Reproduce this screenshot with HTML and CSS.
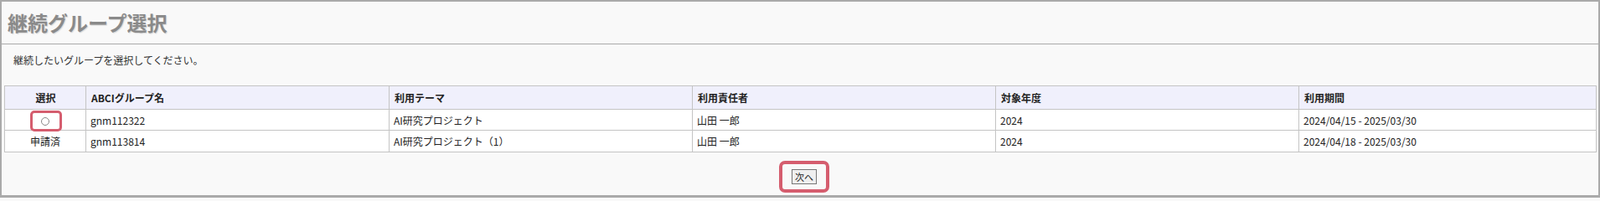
FILE: index.html
```html
<!DOCTYPE html>
<html lang="ja">
<head>
<meta charset="utf-8">
<title>継続グループ選択</title>
<link rel="stylesheet" href="styles.css">
</head>
<body>
<div class="frame">
  <h1 class="title">継続グループ選択</h1>
  <div class="content">
    <p class="lead">継続したいグループを選択してください。</p>
    <table class="groups">
      <colgroup>
        <col class="c-sel"><col class="c-mid"><col class="c-mid"><col class="c-mid"><col class="c-mid"><col>
      </colgroup>
      <thead>
        <tr>
          <th class="center">選択</th>
          <th>ABCIグループ名</th>
          <th>利用テーマ</th>
          <th>利用責任者</th>
          <th>対象年度</th>
          <th>利用期間</th>
        </tr>
      </thead>
      <tbody>
        <tr>
          <td class="center sel-cell"><input type="radio" name="grp" class="radio"><span class="hl-radio"></span></td>
          <td>gnm112322</td>
          <td>AI研究プロジェクト</td>
          <td>山田 一郎</td>
          <td>2024</td>
          <td>2024/04/15 - 2025/03/30</td>
        </tr>
        <tr>
          <td class="center">申請済</td>
          <td>gnm113814</td>
          <td>AI研究プロジェクト（1）</td>
          <td>山田 一郎</td>
          <td>2024</td>
          <td>2024/04/18 - 2025/03/30</td>
        </tr>
      </tbody>
    </table>
    <div class="actions">
      <span class="hl-btn"><button type="button" class="btn">次へ</button></span>
    </div>
  </div>
</div>
</body>
</html>
```

FILE: styles.css
```css
* { box-sizing: border-box; }
html, body { margin: 0; padding: 0; background: #f9f9f9; }
body {
  font-family: "Noto Sans CJK JP", "Noto Sans", sans-serif;
  color: #222;
}
.frame {
  width: 1910px;
  height: 236px;
  border: 2px solid #aaaaaa;
  border-bottom-width: 3px;
  background: #f9f9f9;
}
.title {
  margin: 0;
  height: 51px;
  padding-left: 7px;
  border-bottom: 1px solid #aaaaaa;
  font-size: 24px;
  line-height: 50px;
  font-weight: bold;
  color: #8a8a8a;
  text-shadow: 1px 1px 1px #d8d8d8;
}
.content {
  padding: 0 2px 0 3px;
}
.lead {
  margin: 0;
  padding: 10px 0 0 11px;
  height: 49px;
  font-size: 12px;
  line-height: 18px;
  color: #333;
}
.groups {
  width: 100%;
  border-collapse: collapse;
  table-layout: fixed;
  font-size: 12px;
  border: 1px solid #c4c4c4;
}
.c-sel { width: 97px; }
.c-mid { width: 362px; }
.groups th, .groups td {
  border: 1px solid #c4c4c4;
  text-align: left;
  padding: 0 5px;
  white-space: nowrap;
}
.groups th {
  height: 28px;
  background: #f0f0fc;
  font-weight: bold;
  color: #222;
  padding-left: 6px;
}
.groups td {
  height: 25px;
  background: #ffffff;
  color: #222;
}
.groups tbody tr:last-child td { height: 26px; }
.groups .center { text-align: center; }
.sel-cell { position: relative; }
.radio {
  -webkit-appearance: none;
  appearance: none;
  width: 10px;
  height: 10px;
  margin: 0;
  border: 1px solid #888;
  border-radius: 50%;
  background: #fff;
  vertical-align: middle;
}
.hl-radio {
  position: absolute;
  left: 30px;
  top: 1px;
  width: 38px;
  height: 25px;
  border: 3px solid #d55d6e;
  border-radius: 5px;
  pointer-events: none;
}
.actions {
  padding: 10px 0 0 9px;
  text-align: center;
}
.hl-btn {
  display: inline-block;
  border: 4px solid #d55d6e;
  border-radius: 7px;
  padding: 6px 11px;
  line-height: 0;
}
.btn {
  font-family: "Noto Sans CJK JP", sans-serif;
  font-size: 11px;
  line-height: 14px;
  height: 18px;
  width: 30px;
  padding: 0;
  margin: 0;
  border: 1px solid #767676;
  border-radius: 0;
  background: #efefef;
  color: #222;
}
```
